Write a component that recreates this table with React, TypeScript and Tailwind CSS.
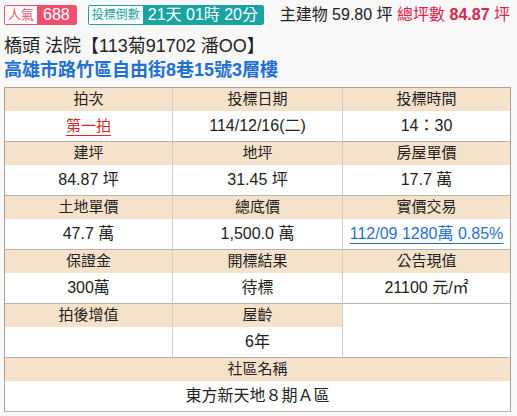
import React from 'react';

const FONT = { fontFamily: '"Liberation Sans", "Noto Sans CJK TC", sans-serif' };

function Head({ children, className = '' }: { children?: React.ReactNode; className?: string }) {
  return (
    <div className={`h-[23px] bg-[#f6e2cb] flex items-center justify-center text-[15px] text-[#222] border-r border-[#d4ccc2] ${className}`}>
      {children}
    </div>
  );
}

function Cell({ children, className = '' }: { children?: React.ReactNode; className?: string }) {
  return (
    <div className={`h-[31px] bg-white flex items-center justify-center text-[16px] text-[#222] border-r border-b border-r-[#d4ccc2] border-b-[#b9b2aa] ${className}`}>
      {children}
    </div>
  );
}

export default function App() {
  return (
    <div className="w-[517px] h-[416px] bg-[#f8f8f8] overflow-hidden px-[4px]" style={FONT}>
      {/* top badges */}
      <div className="flex items-center h-[20px] mt-[5px]">
        <div className="flex h-[20px] border border-[#f0506e] rounded-[2px] overflow-hidden">
          <span className="bg-white text-[#f0506e] text-[13px] px-[3px] flex items-center">人氣</span>
          <span className="bg-[#f0506e] text-white text-[16px] px-[6px] flex items-center">688</span>
        </div>
        <div className="flex h-[20px] border border-[#1aa3a3] rounded-[2px] overflow-hidden ml-[11px]">
          <span className="bg-white text-[#1aa3a3] text-[12px] px-[3px] flex items-center">投標倒數</span>
          <span className="bg-[#1aa3a3] text-white text-[16px] px-[5px] flex items-center">21天 01時 20分</span>
        </div>
        <div className="ml-auto mr-[3px] text-[16px] text-[#222] whitespace-nowrap">
          主建物 59.80 坪 <span className="text-[#d7264f]">總坪數 <b>84.87</b> 坪</span>
        </div>
      </div>

      <div className="mt-[9px] text-[18px] leading-[24px] text-[#222]">橋頭 法院【113菊91702 潘OO】</div>
      <div className="text-[18px] leading-[24px] font-bold text-[#1f70d2]">高雄市路竹區自由街8巷15號3層樓</div>

      <div className="mt-[5px] w-[507px] border border-[#a8a29b] border-b-0 grid grid-cols-[168px_170px_167px]">
        <Head>拍次</Head>
        <Head>投標日期</Head>
        <Head className="border-r-0">投標時間</Head>
        <Cell>
          <span className="text-[#d12b2b] text-[15px] underline underline-offset-[4px]">第一拍</span>
        </Cell>
        <Cell>114/12/16(二)</Cell>
        <Cell className="border-r-0">14：30</Cell>

        <Head>建坪</Head>
        <Head>地坪</Head>
        <Head className="border-r-0">房屋單價</Head>
        <Cell>84.87 坪</Cell>
        <Cell>31.45 坪</Cell>
        <Cell className="border-r-0">17.7 萬</Cell>

        <Head>土地單價</Head>
        <Head>總底價</Head>
        <Head className="border-r-0">實價交易</Head>
        <Cell>47.7 萬</Cell>
        <Cell>1,500.0 萬</Cell>
        <Cell className="border-r-0">
          <span className="text-[#2a6fc9] underline underline-offset-[4px]">112/09 1280萬 0.85%</span>
        </Cell>

        <Head>保證金</Head>
        <Head>開標結果</Head>
        <Head className="border-r-0">公告現值</Head>
        <Cell>300萬</Cell>
        <Cell>待標</Cell>
        <Cell className="border-r-0">21100 元/㎡</Cell>

        <Head>拍後增值</Head>
        <Head>屋齡</Head>
        <div className="row-span-2 bg-white border-b border-[#b9b2aa]"></div>
        <Cell></Cell>
        <Cell>6年</Cell>

        <Head className="col-span-3 border-r-0">社區名稱</Head>
        <Cell className="col-span-3 border-r-0 border-b-[#a8a29b]">東方新天地８期Ａ區</Cell>
      </div>
    </div>
  );
}
